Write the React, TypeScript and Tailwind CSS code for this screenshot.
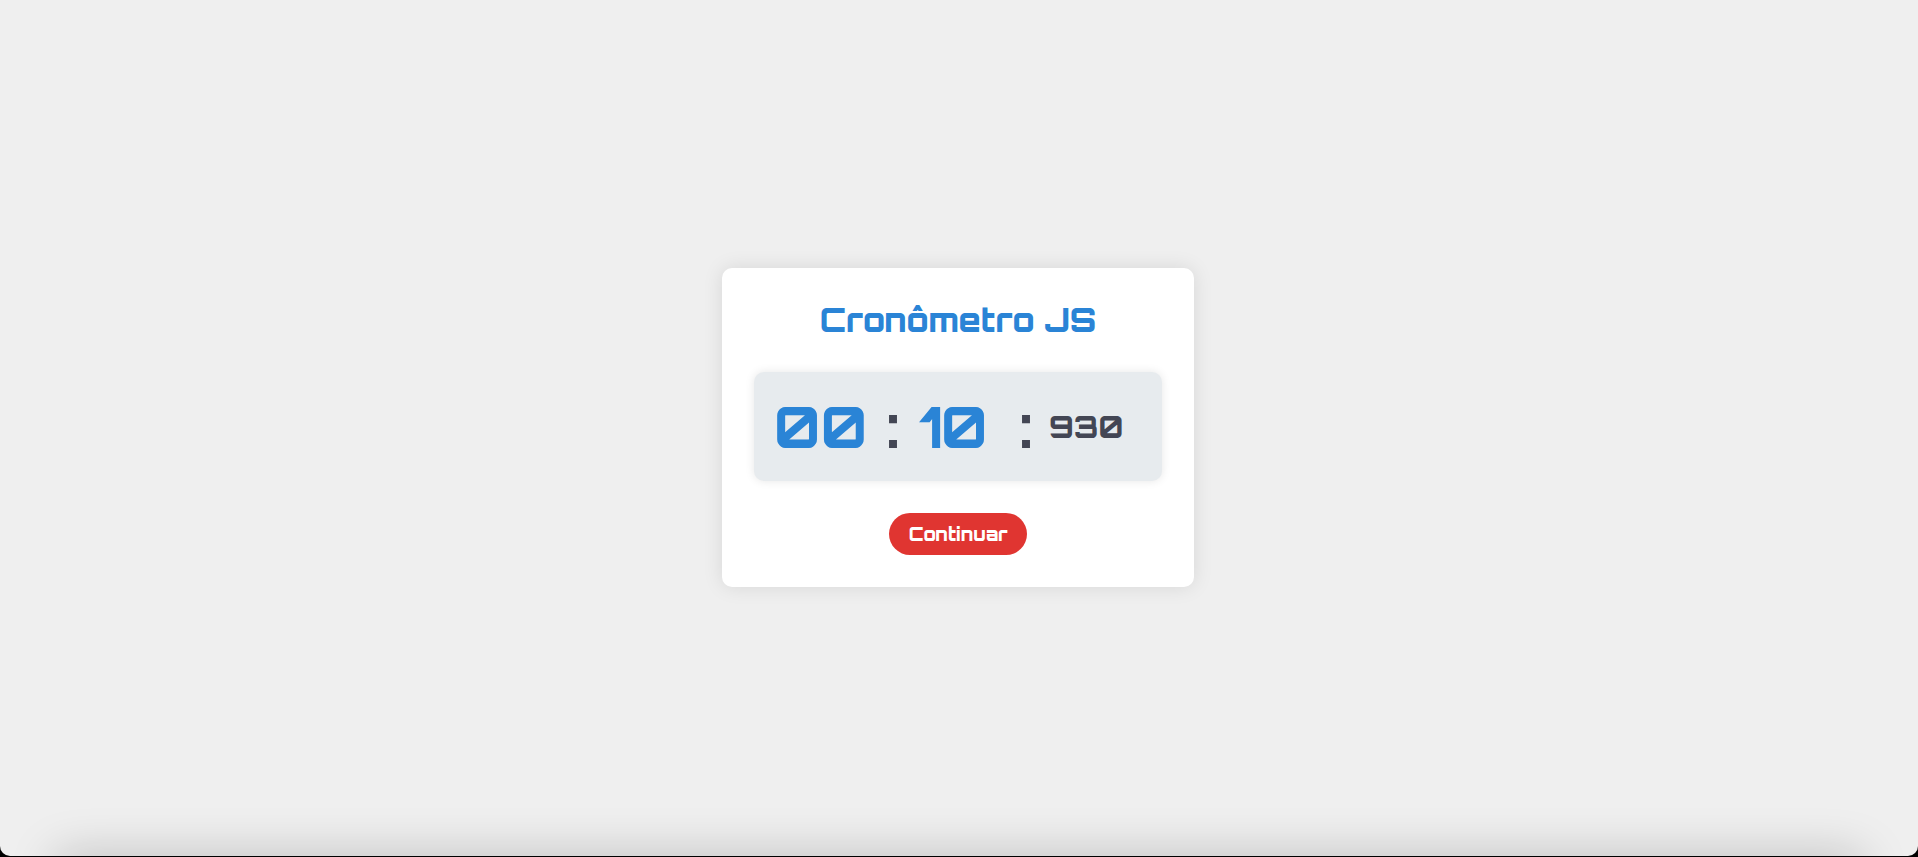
import { useEffect, useState } from "react";

const FONT = "font-['Orbitron','DejaVu_Sans',sans-serif]";

const pad = (value: number, size: number) => String(value).padStart(size, "0");

export default function App() {
  const [elapsed, setElapsed] = useState(10930);
  const [running, setRunning] = useState(false);

  useEffect(() => {
    if (!running) return;
    const id = setInterval(() => setElapsed((t) => t + 10), 10);
    return () => clearInterval(id);
  }, [running]);

  return (
    <div className={`${FONT} flex min-h-screen flex-col bg-black pb-px font-black`}>
      <main className="relative flex grow items-center justify-center overflow-hidden rounded-b-[10px] bg-[#efefef] pr-0.5 pb-0.5">
        <div
          aria-hidden="true"
          className="absolute inset-x-14 top-full h-10 shadow-[0_0_48px_0_rgba(0,0,0,0.22)]"
        />
        <section className="flex w-[472px] flex-col items-center rounded-[10px] bg-white p-8 shadow-[0_0_20px_rgba(0,0,0,0.1)]">
          <h1 className="mb-8 text-[32px] leading-10 whitespace-nowrap text-[#2a84d6]">Cronômetro JS</h1>
          <div
            role="timer"
            className="flex h-[109px] w-full items-center rounded-[10px] bg-[#e7ebee] px-5 pt-0.5 text-[56px] leading-none font-extrabold text-[#434654] shadow-[0_0_10px_rgba(0,0,0,0.1)]"
          >
            <span className="w-28 text-[#2a84d6]">{pad(Math.floor(elapsed / 60000), 2)}</span>
            <span className="w-[33px]">:</span>
            <span className="w-25 text-[#2a84d6]">{pad(Math.floor(elapsed / 1000) % 60, 2)}</span>
            <span className="w-[30px]">:</span>
            <span className="text-[30px]">{pad(elapsed % 1000, 3)}</span>
          </div>
          <button
            type="button"
            onClick={() => setRunning(!running)}
            className="mt-8 h-[42px] cursor-pointer rounded-full bg-[#e03531] px-5 text-lg text-white"
          >
            {running ? "Pausar" : "Continuar"}
          </button>
        </section>
      </main>
    </div>
  );
}
